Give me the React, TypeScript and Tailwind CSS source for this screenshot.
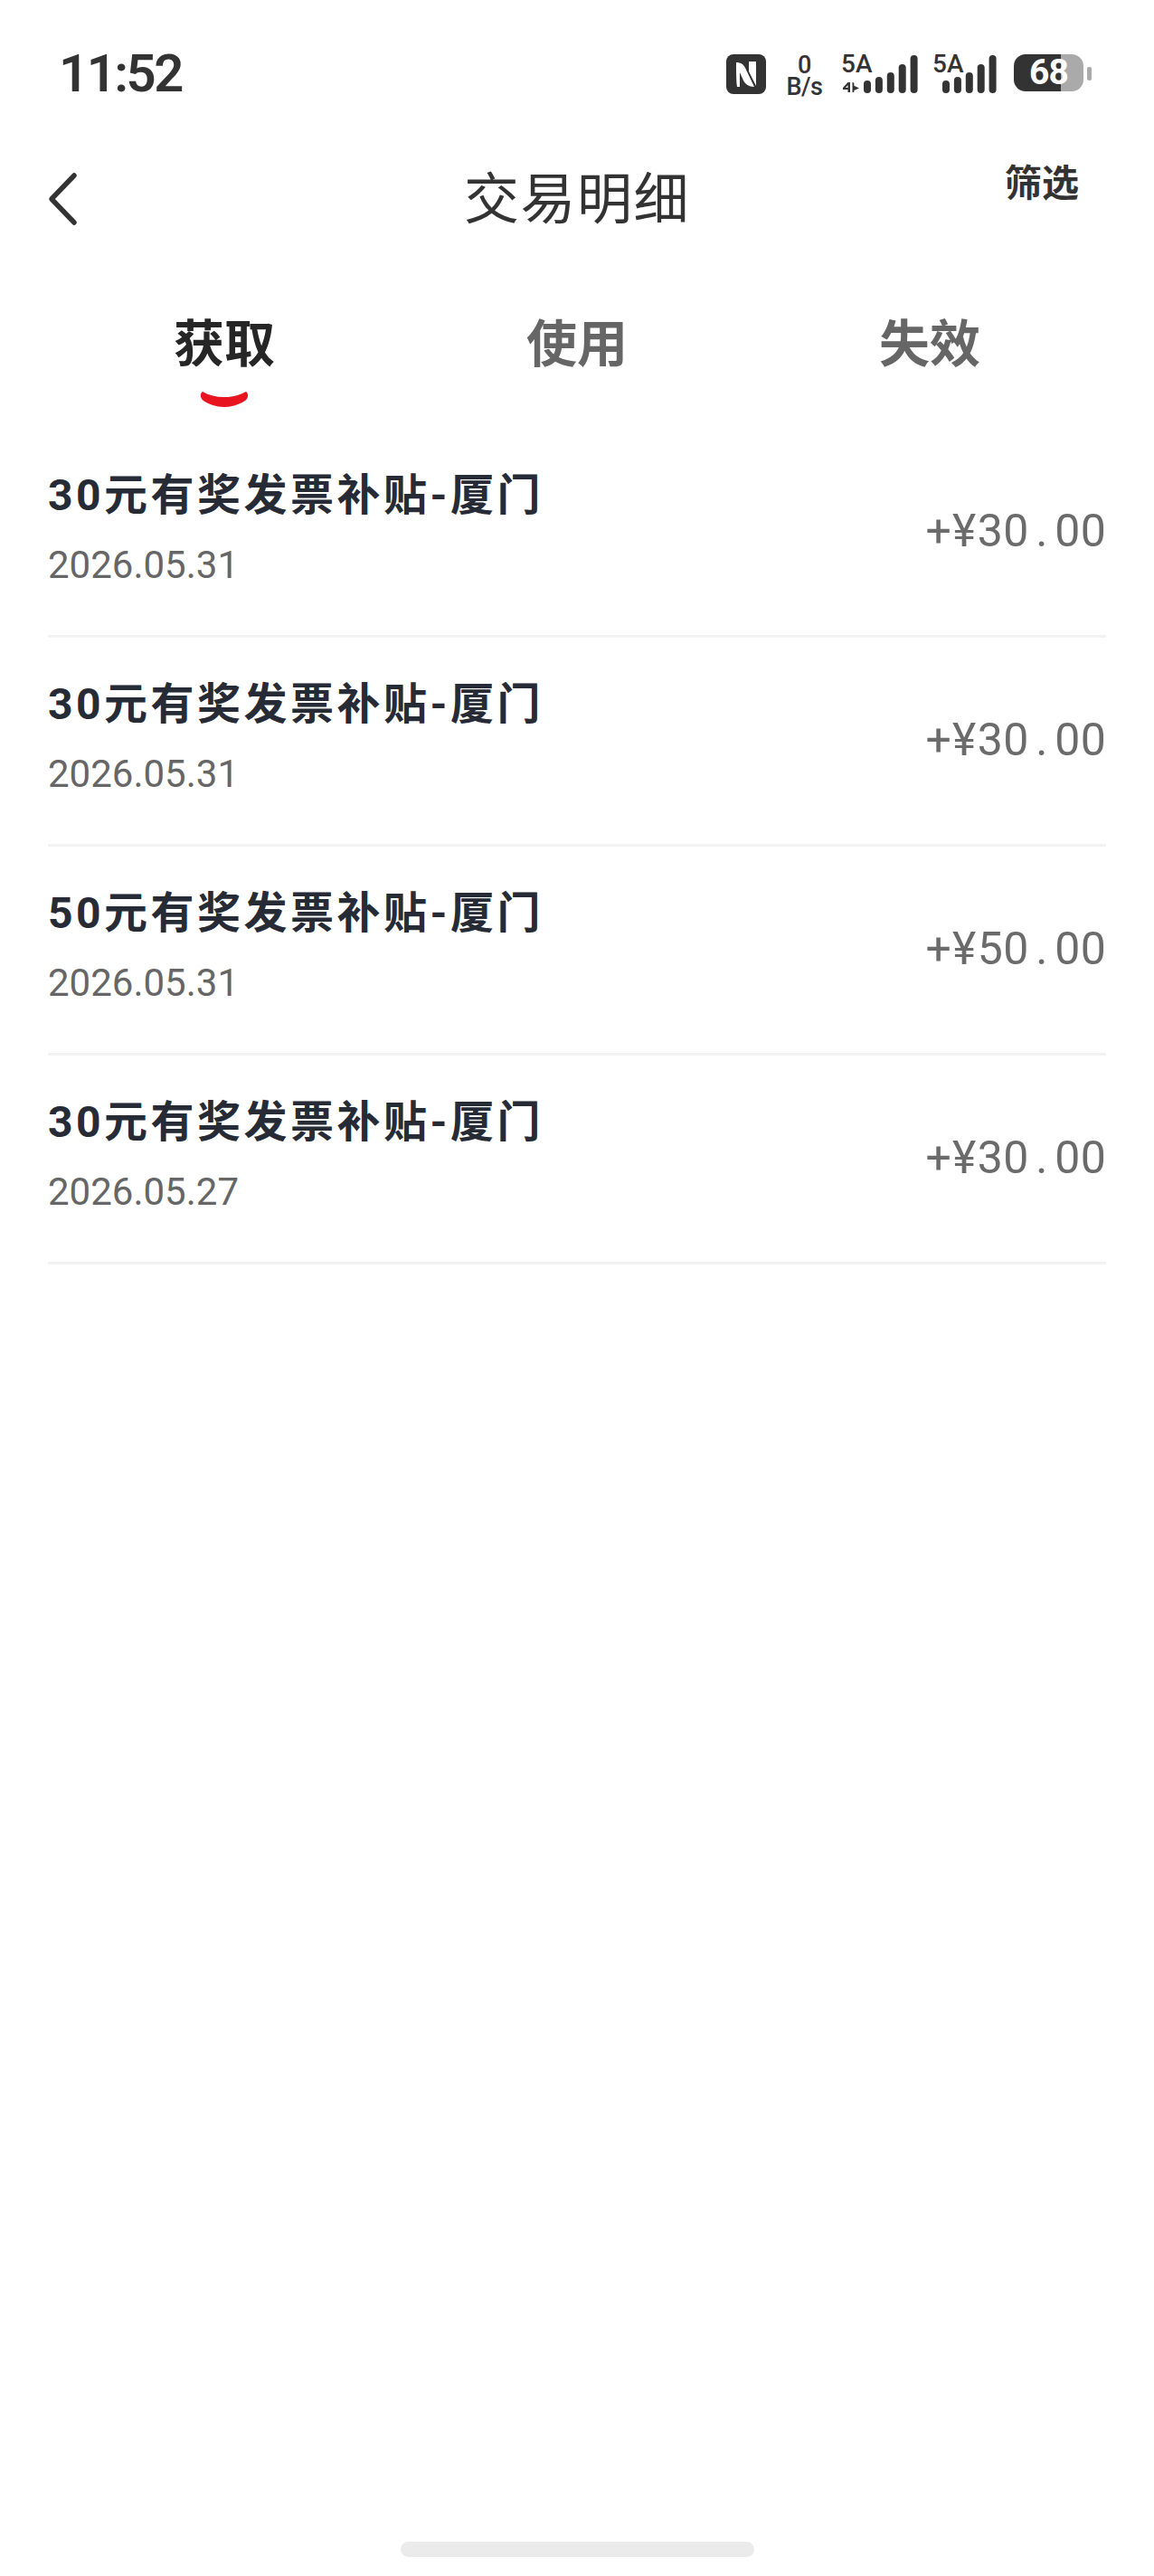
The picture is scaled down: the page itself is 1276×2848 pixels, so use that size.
const rows = [
  { title: '30元有奖发票补贴-厦门', date: '2026.05.31', amount: '+¥30.00' },
  { title: '30元有奖发票补贴-厦门', date: '2026.05.31', amount: '+¥30.00' },
  { title: '50元有奖发票补贴-厦门', date: '2026.05.31', amount: '+¥50.00' },
  { title: '30元有奖发票补贴-厦门', date: '2026.05.27', amount: '+¥30.00' },
];

const tabs = ['获取', '使用', '失效'];

const barHeights = [14, 18, 23, 32, 42];

// 信号格 + 5A 角标
function Signal({ withArrows }: { withArrows?: boolean }) {
  const left = withArrows ? 25 : 11;
  return (
    <div className={`relative h-[44px] ${withArrows ? 'w-[85px]' : 'w-[71px]'}`}>
      <span className="absolute left-0 top-[-3px] text-[28px] leading-[28px] font-medium">5A</span>
      {withArrows && (
        <svg className="absolute left-[2px] top-[30px]" width="20" height="13" viewBox="0 0 20 13" fill="#333">
          <path d="M5.5 1h2.5v11H5.5V9H0V7zM5.5 4L3 7h2.5zM10.5 1l1.8.4v3.4L18 7.5l-5.7 2.6V12h-1.8z" />
        </svg>
      )}
      <svg className="absolute top-0" style={{ left }} width="60" height="44" viewBox="0 0 60 44" fill="#333">
        {barHeights.map((h, i) => (
          <rect key={i} x={i * 12.9} y={43 - h} width="8" height={h} rx="4" />
        ))}
      </svg>
    </div>
  );
}

function StatusBar() {
  return (
    <div className="flex h-[150px] items-start justify-between pl-[65px] pr-[69px] pt-[55px] text-[#333]">
      <span className="text-[58px] leading-[52px] font-semibold tracking-[-2.5px]">11:52</span>
      <div className="mt-[5px] flex items-start">
        <svg width="44" height="44" viewBox="0 0 44 44">
          <rect width="44" height="44" rx="8" fill="#333" />
          <path d="M11 9C16 9 19 11 21 15L31 36C25 36 21 33 19 29L15 20V36H12C11 30 11 16 11 9Z" fill="#fff" />
          <path d="M33 8V35L25 19V8Z" fill="#fff" />
        </svg>
        <div className="ml-[22px] flex w-[41px] flex-col items-center text-[27px] leading-[24px] font-medium tracking-[-0.5px]">
          <span>0</span>
          <span>B/s</span>
        </div>
        <div className="ml-[20px]">
          <Signal withArrows />
        </div>
        <div className="ml-[16px]">
          <Signal />
        </div>
        <div className="relative ml-[19px] flex h-[41px] w-[77px]">
          <div className="h-full w-[52px] rounded-l-[13px] bg-[#333333]" />
          <div className="h-full w-[25px] rounded-r-[13px] bg-[#aaaaaa]" />
          <span className="absolute inset-0 flex items-center justify-center text-[39px] leading-none font-bold tracking-[-1px] text-white">68</span>
        </div>
        <div className="ml-[4px] mt-[14px] h-[15px] w-[5px] rounded-[2px] bg-[#aaaaaa]" />
      </div>
    </div>
  );
}

export default function App() {
  return (
    <div className="flex min-h-[2848px] flex-col bg-white font-['Roboto','Noto_Sans_CJK_SC',sans-serif]">
      <StatusBar />

      {/* 标题栏 */}
      <div className="grid h-[136px] grid-cols-[1fr_auto_1fr] text-[#333]">
        <div className="flex items-center pl-[52px] pt-[4px]">
          <svg width="34" height="60" viewBox="0 0 34 60" fill="none">
            <path d="M30 4L5 30L30 56" stroke="#333" strokeWidth="5.5" strokeLinecap="round" strokeLinejoin="round" />
          </svg>
        </div>
        <div className="flex items-center pt-[6px] text-[61px] leading-none tracking-[1.5px]">交易明细</div>
        <div className="flex justify-end pr-[83px] pt-[31px] text-[41px] leading-[44px] font-semibold">筛选</div>
      </div>

      {/* 分类标签 */}
      <div className="mx-[53px] grid h-[188px] grid-cols-3 pt-[61px]">
        {tabs.map((tab, i) => (
          <div key={tab} className="flex flex-col items-center">
            <span className={`text-[56px] leading-[68px] font-bold ${i === 0 ? 'text-[#262626]' : 'text-[#666666]'}`}>{tab}</span>
            {i === 0 && (
              <svg className="mt-[17px]" width="54" height="18" viewBox="0 0 54 18">
                <path d="M3 1C10 5 18 7 27 7C36 7 44 5 51 1C54 3 54 8 50 11C44 15 36 18 27 18C18 18 10 15 4 11C0 8 0 3 3 1Z" fill="#e8141f" />
              </svg>
            )}
          </div>
        ))}
      </div>

      {/* 明细列表 */}
      {rows.map((r, i) => (
        <div key={i} className="mx-[53px] flex h-[231px] justify-between border-b-[3px] border-[#f3f3f3] pt-[44px]">
          <div>
            <div className="text-[48px] leading-[60px] font-bold tracking-[3.5px] text-[#262b36]">{r.title}</div>
            <div className="mt-[22px] text-[42px] leading-[50px] text-[#666666]">{r.date}</div>
          </div>
          {/* 金额每个字符等宽 */}
          <div className="mt-[39px] flex text-[50px] leading-[60px] text-[#6b6b6b]">
            {r.amount.split('').map((c, j) => (
              <span key={j} className="w-[28.5px] text-center">{c}</span>
            ))}
          </div>
        </div>
      ))}

      {/* Home 指示条 */}
      <div className="mx-auto mb-[21px] mt-auto h-[17px] w-[391px] rounded-full bg-[#ebebeb]" />
    </div>
  );
}
